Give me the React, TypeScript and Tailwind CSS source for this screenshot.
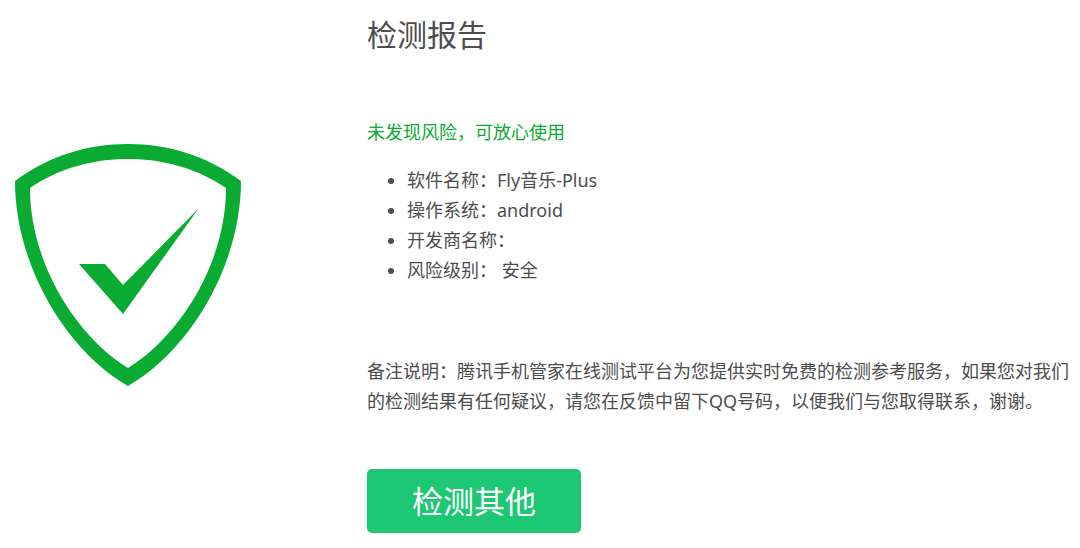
const details = [
  { label: "软件名称：", value: "Fly音乐-Plus" },
  { label: "操作系统：", value: "android" },
  { label: "开发商名称：", value: "" },
  { label: "风险级别： ", value: "安全" },
];

function ShieldIcon() {
  return (
    <svg viewBox="0 0 228 244" className="mt-[143px] h-auto w-[228px] shrink-0 self-start" aria-hidden="true">
      <path
        fill="#0aab32"
        fillRule="evenodd"
        d="M1 38C35 13 73 1 114 1S193 13 227 38C227 120 178 206 114 243C50 206 1 120 1 38ZM16 45C16 120 62 193 114 225C166 193 212 120 212 45C184 26 151 16 114 16S44 26 16 45Z"
      />
      <path fill="#0aab32" d="M65 121H91L109 142L185 65L109 171Z" />
    </svg>
  );
}

export default function App() {
  return (
    <main className="flex min-h-screen bg-white pl-3.5 font-['Noto_Sans','Noto_Sans_CJK_SC',sans-serif] text-[#4d4d4d]">
      <ShieldIcon />
      <section className="ml-[125px] min-w-0 flex-1 pt-[15px] pr-1">
        <h1 className="text-[30px] leading-10">检测报告</h1>
        <p className="mt-[62px] text-[18px] leading-[30px] text-[#0aab32]">未发现风险，可放心使用</p>
        <ul className="mt-[18px] list-disc pl-10 text-[18px] leading-[30px]">
          {details.map((item) => (
            <li key={item.label}>
              {item.label}
              {item.value}
            </li>
          ))}
        </ul>
        <p className="mt-[71px] text-[18px] leading-[30px]">
          备注说明：腾讯手机管家在线测试平台为您提供实时免费的检测参考服务，如果您对我们的检测结果有任何疑议，请您在反馈中留下QQ号码，以便我们与您取得联系，谢谢。
        </p>
        <button type="button" className="mt-[53px] h-16 w-[214px] rounded-[5px] bg-[#1dc773] text-[31px] text-white">
          检测其他
        </button>
      </section>
    </main>
  );
}
